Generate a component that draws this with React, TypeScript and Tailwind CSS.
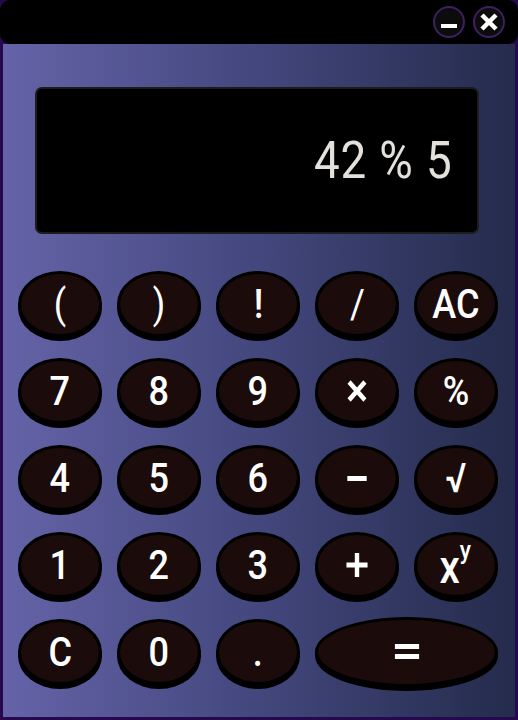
import React from "react";

const keys: { label: React.ReactNode; wide?: boolean; cls?: string }[] = [
  { label: "(", cls: "font-normal" },
  { label: ")", cls: "font-normal" },
  { label: "!" },
  { label: "/", cls: "font-normal" },
  { label: "AC" },
  { label: "7" },
  { label: "8" },
  { label: "9" },
  {
    label: (
      <svg width="26" height="26" viewBox="0 0 26 26">
        <path d="M4 4 L22 22 M22 4 L4 22" stroke="white" strokeWidth="5" strokeLinecap="butt" />
      </svg>
    ),
  },
  { label: "%" },
  { label: "4" },
  { label: "5" },
  { label: "6" },
  {
    label: (
      <svg width="24" height="24" viewBox="0 0 24 24">
        <rect x="1" y="10" width="22" height="5" fill="white" />
      </svg>
    ),
  },
  { label: "√" },
  { label: "1" },
  { label: "2" },
  { label: "3" },
  {
    label: (
      <svg width="26" height="26" viewBox="0 0 26 26">
        <rect x="1" y="10.5" width="24" height="5" fill="white" />
        <rect x="10.5" y="1" width="5" height="24" fill="white" />
      </svg>
    ),
  },
  {
    label: (
      <span className="relative inline-block text-[46px] mt-[4px]">
        x<span className="absolute left-[23px] top-[-7px] text-[26px]">y</span>
      </span>
    ),
    cls: "pr-[12px]",
  },
  { label: "C" },
  { label: "0" },
  { label: "." },
  {
    label: (
      <svg width="28" height="20" viewBox="0 0 28 20">
        <rect x="0" y="2" width="28" height="5" fill="white" />
        <rect x="0" y="12" width="28" height="5" fill="white" />
      </svg>
    ),
    wide: true,
  },
];

export default function App() {
  return (
    <div
      className="w-[518px] h-[720px] flex flex-col bg-[#26084f]"
      style={{ fontFamily: "Roboto, 'Liberation Sans', sans-serif" }}
    >
      <div className="h-[44px] bg-black rounded-[10px] flex items-center justify-end gap-[8px] pr-[13px] shrink-0">
        <div className="w-[32px] h-[32px] rounded-full bg-[#0c0c0c] border-[2px] border-[#3d2063] flex items-center justify-center">
          <svg width="18" height="18" viewBox="0 0 18 18">
            <rect x="1" y="11" width="16" height="4" fill="white" />
          </svg>
        </div>
        <div className="w-[32px] h-[32px] rounded-full bg-[#0c0c0c] border-[2px] border-[#3d2063] flex items-center justify-center">
          <svg width="20" height="20" viewBox="0 0 20 20">
            <path d="M3 3 L17 17 M17 3 L3 17" stroke="white" strokeWidth="4.5" />
          </svg>
        </div>
      </div>
      <div className="flex-1 mx-[3px] mb-[3px] bg-gradient-to-r from-[#6563a8] via-[#43477d] to-[#252b4c] flex flex-col">
        <div className="mt-[43px] ml-[32px] mr-[36px] h-[147px] bg-black border-[2px] border-[#1c1c1c] rounded-[7px] flex items-center justify-end pr-[24px]">
          <span className="inline-block text-[#e4e0dc] text-[52px] leading-none scale-x-[0.88] origin-right tracking-[1px]">
            42 % 5
          </span>
        </div>
        <div className="mt-[37px] ml-[15px] grid grid-cols-[repeat(5,84px)] gap-x-[15px] gap-y-[21px] items-center">
          {keys.map((k, i) => (
            <div
              key={i}
              className={`${k.wide ? "col-span-2 h-[70px] -my-[2px]" : "h-[66px]"} rounded-[50%] bg-[#1b0b0b] border-[3px] border-black shadow-[0_4px_0_#000] flex items-center justify-center text-white text-[41px] font-medium leading-none ${k.cls ?? ""}`}
            >
              <span className="inline-block scale-x-[0.88]">{k.label}</span>
            </div>
          ))}
        </div>
      </div>
    </div>
  );
}
